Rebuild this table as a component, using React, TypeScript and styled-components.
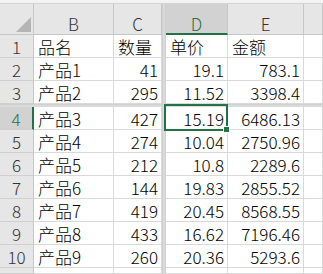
import React from "react";
import styled, { createGlobalStyle } from "styled-components";

const Global = createGlobalStyle`
  html, body { margin: 0; padding: 0; background: #ffffff; }
  body { font-family: "Noto Sans CJK SC", "Noto Sans", sans-serif; overflow: hidden; }
`;

const GREEN = "#217346";
const GRID = "#d9d9d9";

const Sheet = styled.div`
  display: grid;
  width: 323px;
  height: 274px;
  overflow: hidden;
  grid-template-columns: 34px 80px 48px 4px 62px 76px 1fr;
  grid-template-rows: 4px 31px repeat(3, 23px) 3px repeat(7, 23px) 1fr;
  background: #ffffff;
  font-family: "Noto Sans CJK SC", "Noto Sans", sans-serif;
  font-size: 17px;
  color: #000;
`;

const TopStrip = styled.div`
  grid-row: 1;
  grid-column: 1 / -1;
  background: #f3f3f3;
  border-bottom: 1px solid #d4d4d4;
  box-sizing: border-box;
`;

const ColHead = styled.div<{ $sel?: boolean }>`
  box-sizing: border-box;
  background: ${(p) => (p.$sel ? "#d2d2d2" : "#e6e6e6")};
  border-right: 1px solid #c6c6c6;
  border-bottom: ${(p) => (p.$sel ? `2px solid ${GREEN}` : "1px solid #c6c6c6")};
  color: ${(p) => (p.$sel ? GREEN : "#333")};
  display: flex;
  align-items: flex-end;
  justify-content: center;
  font-weight: 300;
  line-height: 19px;
  padding-bottom: ${(p) => (p.$sel ? "0" : "1px")};
`;

const Corner = styled.div`
  box-sizing: border-box;
  background: #e6e6e6;
  border-right: 1px solid #c6c6c6;
  border-bottom: 1px solid #c6c6c6;
  display: flex;
  align-items: flex-end;
  justify-content: flex-end;
  padding: 0 2px 2px 0;
`;

const RowHead = styled.div<{ $sel?: boolean }>`
  box-sizing: border-box;
  background: ${(p) => (p.$sel ? "#d2d2d2" : "#e6e6e6")};
  border-right: ${(p) => (p.$sel ? `2px solid ${GREEN}` : "1px solid #c6c6c6")};
  border-bottom: 1px solid #d0d0d0;
  color: ${(p) => (p.$sel ? GREEN : "#333")};
  display: flex;
  align-items: center;
  justify-content: center;
  font-weight: 300;
  line-height: 1;
`;

const Cell = styled.div<{ $num?: boolean }>`
  position: relative;
  box-sizing: border-box;
  border-right: 1px solid ${GRID};
  border-bottom: 1px solid ${GRID};
  display: flex;
  align-items: center;
  justify-content: ${(p) => (p.$num ? "flex-end" : "flex-start")};
  padding: ${(p) => (p.$num ? "0 3px 0 0" : "0 0 0 4px")};
  white-space: nowrap;
  line-height: 1;
  font-weight: 300;
`;

const VSplit = styled.div`
  grid-column: 4;
  grid-row: 2 / -1;
  background: #dadada;
  border-left: 1px solid #cfcfcf;
  border-right: 1px solid #cfcfcf;
  box-sizing: border-box;
  z-index: 2;
`;

const HSplit = styled.div`
  grid-column: 1 / -1;
  grid-row: 6;
  background: #dadada;
  border-top: 1px solid #d0d0d0;
  box-sizing: border-box;
  z-index: 1;
`;

const Selection = styled.div`
  position: absolute;
  left: -2px;
  top: -3px;
  right: -1px;
  bottom: -2px;
  border: 2px solid ${GREEN};
  z-index: 3;
  pointer-events: none;
`;

const Handle = styled.div`
  position: absolute;
  right: -4px;
  bottom: -4px;
  width: 5px;
  height: 5px;
  background: ${GREEN};
  border: 1px solid #ffffff;
`;

const Triangle = () => (
  <svg width="15" height="15" viewBox="0 0 15 15">
    <polygon points="15,0 15,15 0,15" fill="#b4b4b4" />
  </svg>
);

const rows: [string, string, string, string][] = [
  ["品名", "数量", "单价", "金额"],
  ["产品1", "41", "19.1", "783.1"],
  ["产品2", "295", "11.52", "3398.4"],
  ["产品3", "427", "15.19", "6486.13"],
  ["产品4", "274", "10.04", "2750.96"],
  ["产品5", "212", "10.8", "2289.6"],
  ["产品6", "144", "19.83", "2855.52"],
  ["产品7", "419", "20.45", "8568.55"],
  ["产品8", "433", "16.62", "7196.46"],
  ["产品9", "260", "20.36", "5293.6"],
];

export default function App() {
  return (
    <>
      <Global />
      <Sheet>
        <TopStrip />
        <VSplit />
        <HSplit />
        <Corner>
          <Triangle />
        </Corner>
        <ColHead>B</ColHead>
        <ColHead>C</ColHead>
        <ColHead $sel>D</ColHead>
        <ColHead>E</ColHead>
        <ColHead />
        {rows.map((r, i) => {
          const header = i === 0;
          const sel = i === 3;
          return (
            <React.Fragment key={i}>
              <RowHead $sel={sel}>{i + 1}</RowHead>
              <Cell>{r[0]}</Cell>
              <Cell $num={!header}>{r[1]}</Cell>
              <Cell $num={!header}>
                {r[2]}
                {sel && (
                  <Selection>
                    <Handle />
                  </Selection>
                )}
              </Cell>
              <Cell $num={!header}>{r[3]}</Cell>
              <Cell />
            </React.Fragment>
          );
        })}
        <RowHead />
        <Cell />
        <Cell />
        <Cell />
        <Cell />
        <Cell />
      </Sheet>
    </>
  );
}
